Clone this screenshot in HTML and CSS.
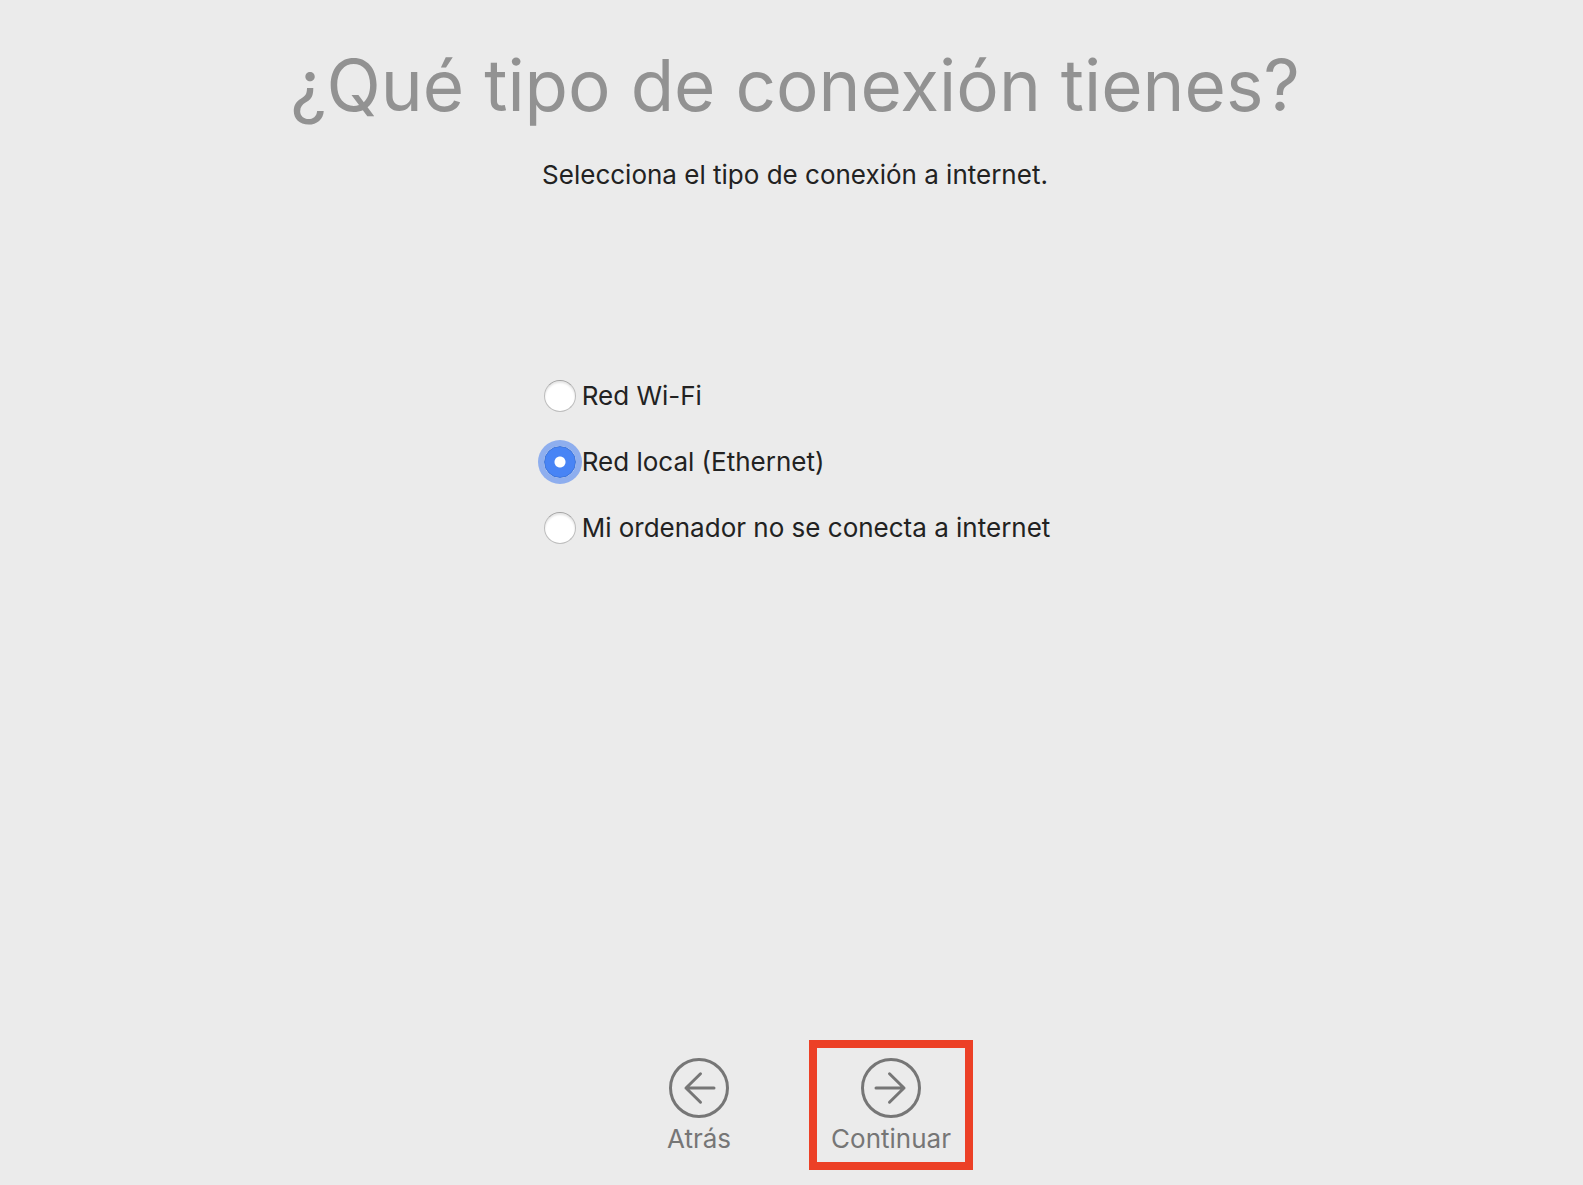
FILE: index.html
```
<!DOCTYPE html>
<html lang="es">
<head>
    <meta charset="UTF-8">
    <meta name="viewport" content="width=device-width, initial-scale=1.0">
    <title>¿Qué tipo de conexión tienes?</title>
    <link rel="stylesheet" href="styles.css">
</head>
<body>

    <form class="assistant">
        <header class="header">
            <h1>¿Qué tipo de conexión tienes?</h1>
            <p id="intro">Selecciona el tipo de conexión a internet.</p>
        </header>

        <div class="options" role="radiogroup" aria-labelledby="intro">
            <label class="option">
                <input type="radio" name="connection" value="wifi">
                <span>Red Wi-Fi</span>
            </label>
            <label class="option">
                <input type="radio" name="connection" value="ethernet" checked>
                <span>Red local (Ethernet)</span>
            </label>
            <label class="option">
                <input type="radio" name="connection" value="none">
                <span>Mi ordenador no se conecta a internet</span>
            </label>
        </div>

        <footer class="actions">
            <button type="button" class="nav-button">
                <svg viewBox="0 0 60 60" aria-hidden="true">
                    <circle cx="30" cy="30" r="28.5"/>
                    <path d="M45 30H17M31.5 15.8L17 30l14.5 14.2"/>
                </svg>
                <span>Atrás</span>
            </button>
            <button type="button" class="nav-button highlighted">
                <svg viewBox="0 0 60 60" aria-hidden="true">
                    <circle cx="30" cy="30" r="28.5"/>
                    <path d="M15 30h28M28.5 15.8L43 30 28.5 44.2"/>
                </svg>
                <span>Continuar</span>
            </button>
        </footer>
    </form>

</body>
</html>
```

FILE: styles.css
```
* {
    box-sizing: border-box;
}
body {
    margin: 0;
    background-color: #ebebeb;
    color: #222;
    font-family: Inter, 'Helvetica Neue', 'Liberation Sans', sans-serif;
    font-size: 26px;
    line-height: 32px;
}
.assistant {
    display: flex;
    flex-direction: column;
    align-items: center;
    min-height: 100vh;
    padding: 36px 0 15px 7px;
}
.header {
    text-align: center;
}
h1 {
    margin: 0;
    color: #929292;
    font-size: 71px;
    font-weight: 400;
    line-height: 98px;
}
p {
    margin: 25px 0 0;
}

/* connection types */
.options {
    display: flex;
    flex-direction: column;
    gap: 34px;
    margin-top: 189px;
    padding-left: 4px;
}
.option {
    display: flex;
    align-items: center;
    gap: 6px;
}
input[type="radio"] {
    appearance: none;
    flex: none;
    width: 32px;
    height: 32px;
    margin: 0;
    border: 1px solid #bdbdbd;
    border-top-color: #a3a3a3;
    border-radius: 50%;
    background-color: #fff;
    box-shadow: inset 0 2px 2px rgba(0, 0, 0, 0.1);
}
input[type="radio"]:checked {
    border-color: #3b74dc;
    background: radial-gradient(circle, #fff 5px, #4884f5 6px);
    box-shadow: 0 0 0 6px #8eaeee;
}

/* bottom navigation */
.actions {
    display: flex;
    gap: 28px;
    margin-top: auto;
}
.nav-button {
    display: flex;
    flex-direction: column;
    align-items: center;
    gap: 5px;
    width: 164px;
    padding: 10px 0 7px;
    border: 8px solid transparent;
    background: none;
    color: #767676;
    font: inherit;
    cursor: pointer;
}
.nav-button svg {
    width: 60px;
    height: 60px;
    fill: none;
    stroke: #767676;
    stroke-width: 3;
    stroke-linecap: round;
    stroke-linejoin: round;
}
.highlighted {
    border-color: #ec4026;
}
```
